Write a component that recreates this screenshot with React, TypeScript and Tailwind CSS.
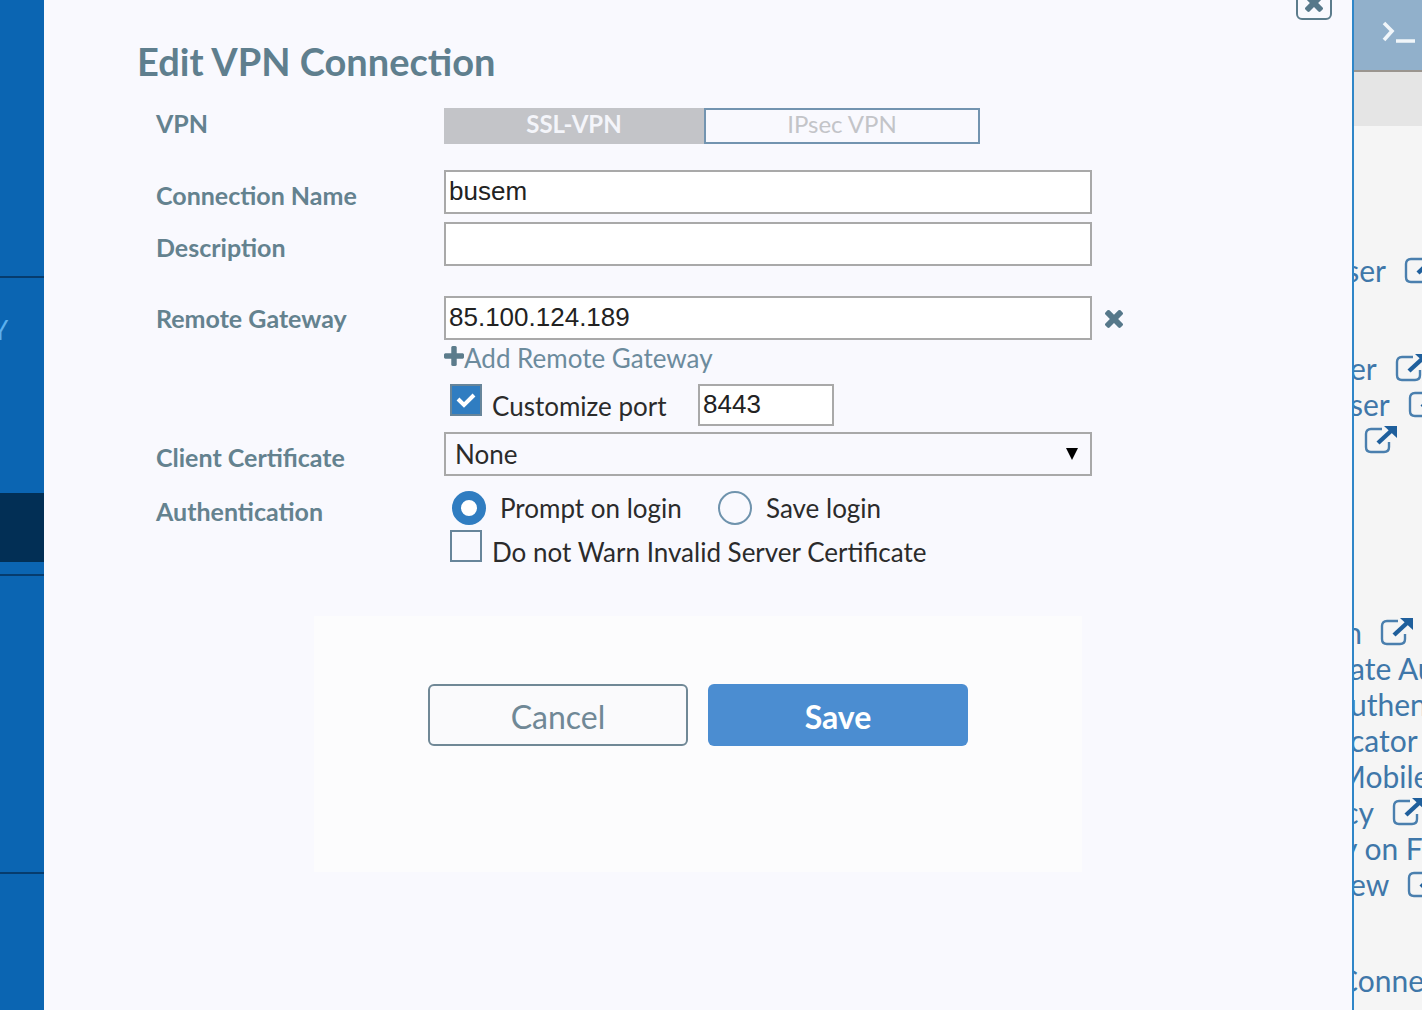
import React, { useState } from 'react';

const TimesIcon = ({ className }: any) => (
  <svg viewBox="302 238 1188 1316" className={className} fill="currentColor" aria-hidden="true">
    <path d="M1490 1322q0 40-28 68l-136 136q-28 28-68 28t-68-28l-294-294-294 294q-28 28-68 28t-68-28l-136-136q-28-28-28-68t28-68l294-294-294-294q-28-28-28-68t28-68l136-136q28-28 68-28t68 28l294 294 294-294q28-28 68-28t68 28l136 136q28 28 28 68t-28 68l-294 294 294 294q28 28 28 68z" />
  </svg>
);

const PlusIcon = ({ className }: any) => (
  <svg viewBox="192 128 1408 1408" className={className} fill="currentColor" aria-hidden="true">
    <path d="M1600 736v192q0 40-28 68t-68 28h-416v416q0 40-28 68t-68 28h-192q-40 0-68-28t-28-68v-416h-416q-40 0-68-28t-28-68v-192q0-40 28-68t68-28h416v-416q0-40 28-68t68-28h192q40 0 68 28t28 68v416h416q40 0 68 28t28 68z" />
  </svg>
);

const ExternalIcon = () => (
  <svg viewBox="0 0 34 30" className="h-[30px] w-[34px] shrink-0" fill="none" aria-hidden="true">
    <path d="M18 4H7Q2 4 2 9V22Q2 27 7 27H20Q25 27 25 22V17" stroke="#4a7fae" strokeWidth="2.4" />
    <path d="M14 18L27 6" stroke="#1f5f9c" strokeWidth="4.4" />
    <path d="M20 1H33V13Z" fill="#1f5f9c" />
  </svg>
);

const Field = ({ label, htmlFor, className, labelClass = 'pt-1.5', children }: any) => (
  <div className={`flex items-center ${className}`}>
    <label htmlFor={htmlFor} className={`w-72 shrink-0 text-[25px] leading-8 font-bold text-[#64828f] ${labelClass}`}>
      {label}
    </label>
    {children}
  </div>
);

const Check = ({ id, ...props }: any) => (
  <span className="grid h-8 w-8 shrink-0">
    <input
      id={id}
      type="checkbox"
      className="peer col-start-1 row-start-1 h-8 w-8 appearance-none border-2 border-[#67859a] checked:bg-[#307dc1]"
      {...props}
    />
    <svg viewBox="0 0 32 32" className="pointer-events-none col-start-1 row-start-1 hidden h-8 w-8 peer-checked:block" fill="none" stroke="#fff" strokeWidth="4" aria-hidden="true">
      <path d="M8 15L14 21L24 11" />
    </svg>
  </span>
);

const Radio = ({ id, ...props }: any) => (
  <input
    id={id}
    type="radio"
    name="auth"
    className="h-[34px] w-[34px] shrink-0 appearance-none rounded-full border-2 border-[#6f93ad] checked:border-[9px] checked:border-[#307dc1] checked:bg-white"
    {...props}
  />
);

const links = [
  { text: 'ser', icon: true, row: 'mt-[126px]', word: 'w-9' },
  { text: 'er', icon: true, row: 'mt-[62px]', word: 'w-9' },
  { text: 'ser', icon: true, row: '', word: 'w-11' },
  { text: '', icon: true, row: '-ml-1', word: 'w-0' },
  { text: 'n', icon: true, row: 'mt-[156px]', word: 'w-3' },
  { text: 'ate Authentication', row: '' },
  { text: 'uthenticator', row: '' },
  { text: 'cator', row: '' },
  { text: 'Mobile', row: '-ml-3' },
  { text: 'cy', icon: true, row: '', word: 'w-6' },
  { text: 'y on FortiClient', row: '-ml-2' },
  { text: 'ew', icon: true, row: '', word: 'w-11' },
  { text: 'Connection', row: 'mt-[60px] -ml-3' },
];

const inputClass = 'border-2 border-[#a9a9a9] bg-white px-[3px] pb-0.5 text-[26px] leading-8 text-[#222] font-[Liberation_Sans,sans-serif]';

const App = () => {
  const [gateway, setGateway] = useState('85.100.124.189');

  return (
    <div className="flex h-screen min-h-[1010px] overflow-hidden font-[Lato,sans-serif]">
      <nav className="w-11 shrink-0 overflow-hidden bg-[#0b65b2]">
        <div className="h-[278px] border-b-2 border-[#063c6e]" />
        <div className="h-[215px] pt-9">
          <span className="-ml-2 block text-[26px] leading-8 text-[#5cb0ee]">Y</span>
        </div>
        <div className="h-[69px] bg-[#022f55]" />
        <div className="h-[14px] border-b-2 border-[#063c6e]" />
        <div className="h-[298px] border-b-2 border-[#063c6e]" />
      </nav>

      <main className="relative min-w-0 flex-1 border-r-2 border-[#2f86c8] bg-[#f9f9fe]">
        <button type="button" aria-label="Close" className="absolute -top-4 right-5 flex h-9 w-9 items-center justify-center rounded-md border-2 border-[#5c7c8c] text-[#56788a]">
          <TimesIcon className="h-5 w-5" />
        </button>

        <form className="pt-9" onSubmit={(e) => e.preventDefault()}>
          <h1 className="pl-[93px] text-[38px] leading-[50px] font-bold text-[#5f7f8e]">Edit VPN Connection</h1>

          <div className="pl-28">
            <div className="mt-[22px] flex h-9 items-start">
              <span className="w-72 shrink-0 text-[25px] leading-[30px] font-bold text-[#64828f]">VPN</span>
              <button type="button" className="h-9 w-[260px] bg-[#c3c4c8] pb-1 text-[24px] leading-8 font-bold text-[#f4f5fa]">SSL-VPN</button>
              <button type="button" className="h-9 w-[276px] border-2 border-[#7394b0] pb-1 text-[24px] leading-7 text-[#c3c4c8]">IPsec VPN</button>
            </div>

            <Field label="Connection Name" htmlFor="name" className="mt-[26px]">
              <input id="name" defaultValue="busem" className={`${inputClass} h-11 w-[648px]`} />
            </Field>
            <Field label="Description" htmlFor="description" className="mt-2">
              <input id="description" className={`${inputClass} h-11 w-[648px]`} />
            </Field>
            <Field label="Remote Gateway" htmlFor="gateway" className="mt-[30px]" labelClass="pt-0">
              <input
                id="gateway"
                value={gateway}
                onChange={(e) => setGateway(e.target.value)}
                className={`${inputClass} h-11 w-[648px]`}
              />
              <button type="button" aria-label="Remove gateway" className="ml-3 text-[#56788a]" onClick={() => setGateway('')}>
                <TimesIcon className="h-5 w-5" />
              </button>
            </Field>

            <div className="pl-72">
              <button type="button" className="mt-0.5 flex items-start text-[26px] leading-8 text-[#6c8b9d]">
                <PlusIcon className="mt-1 h-5 w-5 text-[#5c7c8c]" />
                Add Remote Gateway
              </button>
              <div className="mt-[10px] flex pl-[6px] text-[26px] leading-8 text-[#2b2b2b]">
                <Check id="port-on" defaultChecked />
                <label htmlFor="port-on" className="w-[216px] pt-[6px] pl-[10px]">Customize port</label>
                <input aria-label="Port" defaultValue="8443" className={`${inputClass} h-[42px] w-[136px]`} />
              </div>
            </div>

            <Field label="Client Certificate" htmlFor="certificate" className="mt-[6px]">
              <span className="grid items-center">
                <select id="certificate" className="col-start-1 row-start-1 h-11 w-[648px] appearance-none border-2 border-[#a9a9a9] bg-transparent px-[9px] text-[26px] leading-8 text-[#2b2b2b]">
                  <option>None</option>
                </select>
                <svg viewBox="0 0 12 12" className="pointer-events-none col-start-1 row-start-1 mr-[14px] h-3 w-3 justify-self-end" aria-hidden="true">
                  <path d="M0 0H12L6 12Z" />
                </svg>
              </span>
            </Field>

            <div className="mt-[14px] flex h-9 items-center text-[26px] leading-8 text-[#2b2b2b]">
              <span className="w-[296px] shrink-0 pt-1.5 text-[25px] font-bold text-[#64828f]">Authentication</span>
              <Radio id="prompt" defaultChecked />
              <label htmlFor="prompt" className="w-[232px] pl-[14px]">Prompt on login</label>
              <Radio id="save" />
              <label htmlFor="save" className="pl-[14px]">Save login</label>
            </div>
            <div className="mt-1 flex pl-[294px] text-[26px] leading-8 text-[#2b2b2b]">
              <Check id="warn" />
              <label htmlFor="warn" className="pt-[6px] pl-[10px]">Do not Warn Invalid Server Certificate</label>
            </div>
          </div>

          <div className="mx-auto mt-12 flex h-64 w-[768px] items-start justify-center gap-5 bg-[#fcfcfd] pt-[68px] text-[32px] leading-9">
            <button type="button" className="h-[62px] w-[260px] rounded-md border-2 border-[#708896] bg-[#fafafc] pt-1 text-[#708896]">Cancel</button>
            <button type="submit" className="h-[62px] w-[260px] rounded-md bg-[#4b8dd1] pt-1 font-bold text-white">Save</button>
          </div>
        </form>
      </main>

      <aside className="w-[68px] shrink-0 overflow-hidden bg-[#f5f5f5]">
        <div className="flex h-[72px] border-b-2 border-[#9a958f] bg-[#91b0cb] pt-5 pl-7">
          <svg viewBox="0 0 34 24" className="h-6 w-[34px]" fill="none" stroke="#f1f6fa" strokeWidth="3.6" aria-hidden="true">
            <path d="M2 3L10 11L2 20M14 21H33" />
          </svg>
        </div>
        <div className="h-[54px] bg-[#e5e5e5]" />
        <ul className="-ml-1 text-[30px] leading-9 whitespace-nowrap text-[#3f77a9]">
          {links.map((link, i) => (
            <li key={i} className={link.row}>
              <a href="#" className="flex h-9 items-center gap-[18px]">
                <span className={`flex justify-end ${link.word}`}>{link.text}</span>
                {link.icon && <ExternalIcon />}
              </a>
            </li>
          ))}
        </ul>
      </aside>
    </div>
  );
};

export default App;
